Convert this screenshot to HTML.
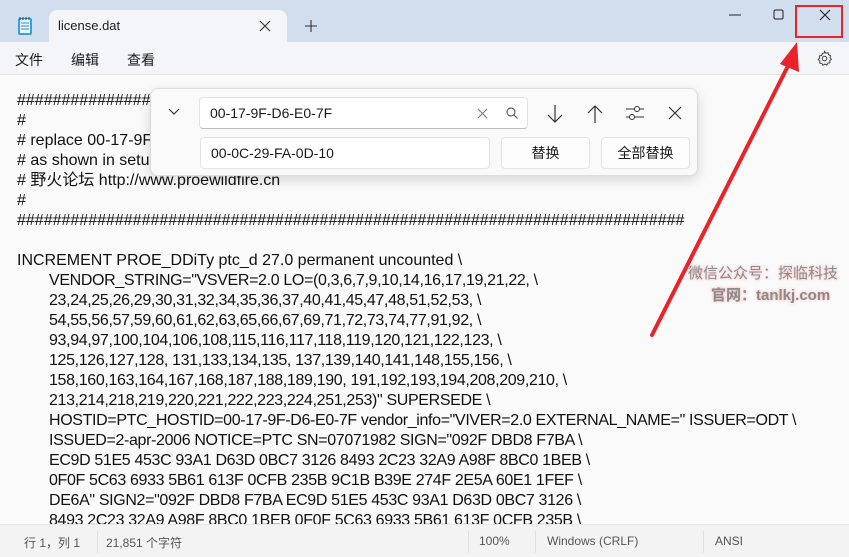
<!DOCTYPE html>
<html><head><meta charset="utf-8"><style>
*{margin:0;padding:0;box-sizing:border-box}
body{width:849px;height:557px;overflow:hidden;background:#fafafa;font-family:"Liberation Sans","Noto Sans CJK SC",sans-serif;position:relative;color:#1a1a1a}
.titlebar{position:absolute;left:0;top:0;width:849px;height:42px;background:#d1deed}
.tab{position:absolute;left:49px;top:10px;width:238px;height:32px;background:#f3f5f8;border-radius:8px 8px 0 0}
.menubar{position:absolute;left:0;top:42px;width:849px;height:33px;background:#f3f5f8;border-bottom:1px solid #e6e6e6}
.menubar span{position:absolute;top:8px;font-size:14px}
.text{position:absolute;left:17px;top:91px;font-size:16px;letter-spacing:0px;line-height:20px;white-space:pre;color:#111}
.text .i{padding-left:32px}
.text .n{letter-spacing:-0.35px}
.status{position:absolute;left:0;top:524px;width:849px;height:33px;background:#f3f3f3;font-size:12px;color:#555;border-top:1px solid #e8e8e8}
.status span{position:absolute;top:9px}
.sep{position:absolute;top:6px;width:1px;height:22px;background:#e0e0e0}
.find{position:absolute;left:150px;top:88px;width:548px;height:88px;background:#f9f9f9;border:1px solid #dcdcdc;border-radius:8px;box-shadow:0 4px 12px rgba(0,0,0,.15)}
.inp{position:absolute;background:#fff;border:1px solid #e3e3e3;border-radius:4px;font-size:14px}
.btn{position:absolute;background:#fdfdfd;border:1px solid #e3e3e3;border-radius:4px;font-size:14px;text-align:center;line-height:30px}
.wm{position:absolute;font-size:15px;color:#8a8a8a;text-shadow:0 0 3px rgba(255,120,120,.6);white-space:nowrap}
</style></head><body>
<div class="titlebar"></div>
<div class="tab"></div>
<svg style="position:absolute;left:17px;top:16px" width="16" height="20"><rect x="1" y="2" width="14" height="17" rx="2" fill="#3aa0d8"/><rect x="3" y="3" width="10" height="14" fill="#e8f4fb"/><path d="M4 7h8M4 10h8M4 13h8" stroke="#3a8cc0"/><path d="M3 1v3M6 1v3M9 1v3M12 1v3" stroke="#333"/></svg>
<div style="position:absolute;left:58px;top:18px;font-size:13px">license.dat</div>
<svg style="position:absolute;left:259px;top:20px" width="12" height="12"><path d="M1 1L11 11M11 1L1 11" stroke="#333" stroke-width="1.1"/></svg>
<svg style="position:absolute;left:305px;top:20px" width="12" height="12"><path d="M6 0V12M0 6H12" stroke="#333" stroke-width="1.1"/></svg>
<svg style="position:absolute;left:729px;top:14px" width="12" height="2"><path d="M0 1H12" stroke="#222"/></svg>
<svg style="position:absolute;left:773px;top:9px" width="12" height="12"><rect x="1" y="1" width="9" height="9" rx="1.5" fill="none" stroke="#222"/></svg>
<svg style="position:absolute;left:819px;top:9px" width="12" height="12"><path d="M1 1L11 11M11 1L1 11" stroke="#222" stroke-width="1.1"/></svg>
<div style="position:absolute;left:795px;top:5px;width:48px;height:33px;border:2px solid #e8232a"></div>
<div class="menubar"><span style="left:15px">文件</span><span style="left:71px">编辑</span><span style="left:127px">查看</span></div>
<svg style="position:absolute;left:816px;top:50px" width="17" height="17" viewBox="0 0 24 24"><path d="M12 2l2 2.5 3-.8.8 3L20.5 8l-.6 3 2 2-2.5 2 .3 3-3 .6-1.5 2.7-2.7-1.4L9.8 21.6 8.3 19l-3-.5.2-3-2.3-2 2-2.2-.4-3 3-.6L9 4.8l3-.8z" fill="none" stroke="#444" stroke-width="1.4"/><circle cx="12" cy="12" r="3.2" fill="none" stroke="#444" stroke-width="1.4"/></svg>
<div class="text"><div>###########################################################################</div><div>#</div><div># replace 00-17-9F-D6-E0-7F with your host ID</div><div># as shown in setup</div><div># 野火论坛 http://www.proewildfire.cn</div><div>#</div><div>###########################################################################</div><div> </div><div>INCREMENT PROE_DDiTy ptc_d 27.0 permanent uncounted \</div><div class="i n">VENDOR_STRING="VSVER=2.0 LO=(0,3,6,7,9,10,14,16,17,19,21,22, \</div><div class="i n">23,24,25,26,29,30,31,32,34,35,36,37,40,41,45,47,48,51,52,53, \</div><div class="i n">54,55,56,57,59,60,61,62,63,65,66,67,69,71,72,73,74,77,91,92, \</div><div class="i n">93,94,97,100,104,106,108,115,116,117,118,119,120,121,122,123, \</div><div class="i n">125,126,127,128, 131,133,134,135, 137,139,140,141,148,155,156, \</div><div class="i n">158,160,163,164,167,168,187,188,189,190, 191,192,193,194,208,209,210, \</div><div class="i n">213,214,218,219,220,221,222,223,224,251,253)" SUPERSEDE \</div><div class="i n">HOSTID=PTC_HOSTID=00-17-9F-D6-E0-7F vendor_info="VIVER=2.0 EXTERNAL_NAME=" ISSUER=ODT \</div><div class="i n">ISSUED=2-apr-2006 NOTICE=PTC SN=07071982 SIGN="092F DBD8 F7BA \</div><div class="i n">EC9D 51E5 453C 93A1 D63D 0BC7 3126 8493 2C23 32A9 A98F 8BC0 1BEB \</div><div class="i n">0F0F 5C63 6933 5B61 613F 0CFB 235B 9C1B B39E 274F 2E5A 60E1 1FEF \</div><div class="i n">DE6A" SIGN2="092F DBD8 F7BA EC9D 51E5 453C 93A1 D63D 0BC7 3126 \</div><div class="i n">8493 2C23 32A9 A98F 8BC0 1BEB 0F0F 5C63 6933 5B61 613F 0CFB 235B \</div></div>
<div class="find">
<svg style="position:absolute;left:17px;top:19px" width="12" height="8"><path d="M1 1L6 6L11 1" fill="none" stroke="#333" stroke-width="1.2"/></svg>
<div class="inp" style="left:48px;top:8px;width:329px;height:32px;border-bottom:1.5px solid #bbb"><span style="position:absolute;left:10px;top:7px">00-17-9F-D6-E0-7F</span>
<svg style="position:absolute;left:277px;top:10px" width="11" height="11"><path d="M1 1L10 10M10 1L1 10" stroke="#777"/></svg>
<svg style="position:absolute;left:306px;top:9px" width="12" height="12"><circle cx="5" cy="5" r="4" fill="none" stroke="#444"/><path d="M8 8L11.5 11.5" stroke="#444"/></svg></div>
<svg style="position:absolute;left:395px;top:15px" width="18" height="20"><path d="M9 1V18M2 11L9 18L16 11" fill="none" stroke="#333" stroke-width="1.2"/></svg>
<svg style="position:absolute;left:435px;top:15px" width="18" height="20"><path d="M9 19V2M2 9L9 2L16 9" fill="none" stroke="#333" stroke-width="1.2"/></svg>
<svg style="position:absolute;left:475px;top:15px" width="18" height="18"><path d="M0 5H18M0 13H18" stroke="#333"/><circle cx="11" cy="5" r="2.5" fill="#f9f9f9" stroke="#333"/><circle cx="6" cy="13" r="2.5" fill="#f9f9f9" stroke="#333"/></svg>
<svg style="position:absolute;left:517px;top:17px" width="14" height="14"><path d="M1 1L13 13M13 1L1 13" stroke="#333" stroke-width="1.2"/></svg>
<div class="inp" style="left:49px;top:48px;width:290px;height:32px"><span style="position:absolute;left:10px;top:7px">00-0C-29-FA-0D-10</span></div>
<div class="btn" style="left:350px;top:48px;width:89px;height:32px">替换</div>
<div class="btn" style="left:450px;top:48px;width:89px;height:32px">全部替换</div>
</div>
<div class="wm" style="left:688px;top:262px">微信公众号：探临科技</div>
<div class="wm" style="left:711px;top:284px;font-weight:bold">官网：tanlkj.com</div>
<svg style="position:absolute;left:0;top:0" width="849" height="557"><path d="M652 335L791 60" stroke="#e8232a" stroke-width="4" stroke-linecap="round"/><path d="M797 42L780 64L799 72Z" fill="#e8232a"/></svg>
<div class="status">
<span style="left:24px">行 1，列 1</span><div class="sep" style="left:97px"></div>
<span style="left:106px">21,851 个字符</span><div class="sep" style="left:468px"></div>
<span style="left:479px">100%</span><div class="sep" style="left:535px"></div>
<span style="left:547px">Windows (CRLF)</span><div class="sep" style="left:703px"></div>
<span style="left:715px">ANSI</span>
</div>
</body></html>
